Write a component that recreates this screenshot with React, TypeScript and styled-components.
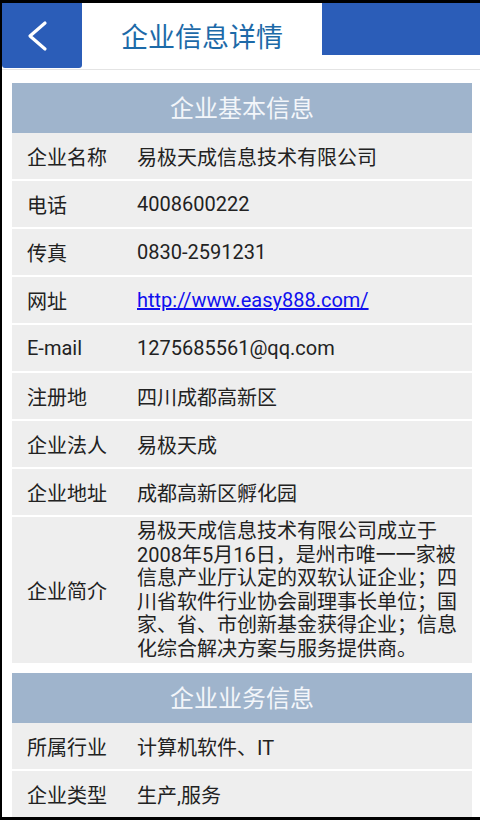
import React from "react";
import styled, { createGlobalStyle } from "styled-components";

interface InfoItem {
  label: string;
  value: string;
  href?: string;
}

const BASIC_INFO: InfoItem[] = [
  { label: "企业名称", value: "易极天成信息技术有限公司" },
  { label: "电话", value: "4008600222" },
  { label: "传真", value: "0830-2591231" },
  { label: "网址", value: "http://www.easy888.com/", href: "#" },
  { label: "E-mail", value: "1275685561@qq.com" },
  { label: "注册地", value: "四川成都高新区" },
  { label: "企业法人", value: "易极天成" },
  { label: "企业地址", value: "成都高新区孵化园" },
];

const INTRO =
  "易极天成信息技术有限公司成立于2008年5月16日，是州市唯一一家被信息产业厅认定的双软认证企业；四川省软件行业协会副理事长单位；国家、省、市创新基金获得企业；信息化综合解决方案与服务提供商。";

const BUSINESS_INFO: InfoItem[] = [
  { label: "所属行业", value: "计算机软件、IT" },
  { label: "企业类型", value: "生产,服务" },
];

const App: React.FC = () => {
  return (
    <>
      <GlobalStyle />
      <Screen>
        <Header>
          <BackButton type="button" aria-label="返回">
            <svg width="24" height="32" viewBox="0 0 24 32">
              <path
                d="M19 3 L4 16 L19 29"
                fill="none"
                stroke="#ffffff"
                strokeWidth="3.2"
                strokeLinecap="round"
                strokeLinejoin="round"
              />
            </svg>
          </BackButton>
          <Title>企业信息详情</Title>
          <HeaderFill />
        </Header>

        <Content>
          <Section>
            <SectionTitle>企业基本信息</SectionTitle>
            <RowList>
              {BASIC_INFO.map((item) => (
                <Row key={item.label}>
                  <Label>{item.label}</Label>
                  <Value>
                    {item.href ? (
                      <LinkText href={item.href}>{item.value}</LinkText>
                    ) : (
                      item.value
                    )}
                  </Value>
                </Row>
              ))}
              <Row $tall>
                <Label>企业简介</Label>
                <Value $multiline>{INTRO}</Value>
              </Row>
            </RowList>
          </Section>

          <Section>
            <SectionTitle>企业业务信息</SectionTitle>
            <RowList>
              {BUSINESS_INFO.map((item) => (
                <Row key={item.label}>
                  <Label>{item.label}</Label>
                  <Value>{item.value}</Value>
                </Row>
              ))}
            </RowList>
          </Section>
        </Content>
      </Screen>
    </>
  );
};

export default App;

const GlobalStyle = createGlobalStyle`
  html, body {
    margin: 0;
    padding: 0;
    background: #000000;
  }
  body {
    font-family: Roboto, "Noto Sans CJK SC", sans-serif;
  }
  * {
    box-sizing: border-box;
  }
`;

const Screen = styled.div`
  margin: 3px 0 0 2px;
  width: 478px;
  height: 814px;
  overflow: hidden;
  background: #ffffff;
`;

const Header = styled.header`
  display: flex;
  align-items: flex-start;
  height: 67px;
  border-bottom: 1px solid #e4e4e4;
`;

const BackButton = styled.button`
  display: flex;
  align-items: center;
  justify-content: center;
  width: 80px;
  height: 65px;
  padding: 0 8px 0 0;
  border: none;
  border-radius: 0 0 3px 3px;
  background: #2b5db8;
  cursor: pointer;
`;

const Title = styled.h1`
  margin: 0;
  width: 240px;
  height: 66px;
  padding-bottom: 2px;
  display: flex;
  align-items: center;
  justify-content: center;
  font-size: 27px;
  font-weight: 400;
  color: #1d6aa8;
`;

const HeaderFill = styled.div`
  flex: 1;
  height: 52px;
  background: #2b5db8;
`;

const Content = styled.main`
  display: flex;
  flex-direction: column;
  gap: 10px;
  padding: 13px 8px 0 10px;
`;

const Section = styled.section`
  display: flex;
  flex-direction: column;
`;

const SectionTitle = styled.h2`
  margin: 0;
  height: 50px;
  padding-bottom: 3px;
  display: flex;
  align-items: center;
  justify-content: center;
  background: #9fb4cc;
  color: #f3f6fa;
  font-size: 24px;
  font-weight: 400;
`;

const RowList = styled.div`
  display: flex;
  flex-direction: column;
  gap: 2px;
`;

const Row = styled.div<{ $tall?: boolean }>`
  display: flex;
  align-items: center;
  min-height: 46px;
  padding: ${(p) => (p.$tall ? "3px 0 2px" : "0")};
  background: #eeeeee;
`;

const Label = styled.div`
  flex: 0 0 125px;
  padding-left: 15px;
  font-size: 20px;
  color: #222222;
  white-space: nowrap;
`;

const Value = styled.div<{ $multiline?: boolean }>`
  flex: 1;
  padding-right: 12px;
  font-size: 20px;
  color: #222222;
  line-height: ${(p) => (p.$multiline ? "23.5px" : "normal")};
`;

const LinkText = styled.a`
  color: #1010ee;
  text-decoration: underline;
`;
